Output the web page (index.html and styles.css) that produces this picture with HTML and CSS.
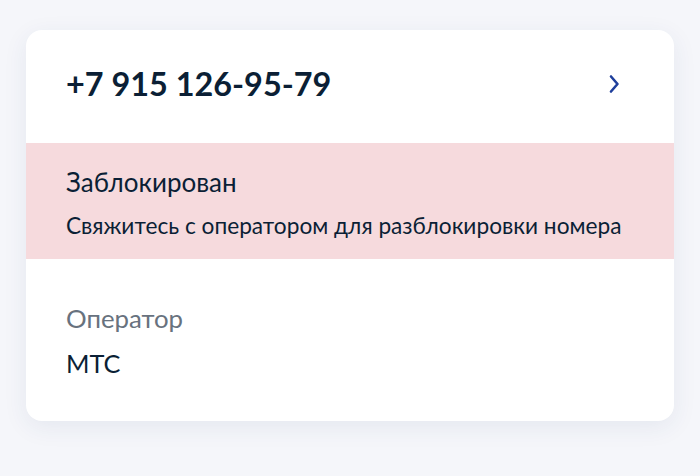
FILE: index.html
```html
<!DOCTYPE html>
<html lang="ru">
<head>
    <meta charset="UTF-8">
    <meta name="viewport" content="width=device-width, initial-scale=1.0">
    <title>Номер телефона</title>
    <link rel="stylesheet" href="styles.css">
</head>
<body>
    <div class="phone-card">
        <div class="phone-head">
            <span class="phone-number">+7 915 126-95-79</span>
            <svg class="chevron" width="24" height="24" viewBox="0 0 24 24" aria-hidden="true">
                <path d="M9 4.5 L15.5 12 L9 19.5" fill="none" stroke="#1f3f9c" stroke-width="2.6" stroke-linecap="round" stroke-linejoin="round"/>
            </svg>
        </div>
        <div class="status-block">
            <div class="status-title">Заблокирован</div>
            <div class="status-text">Свяжитесь с оператором для разблокировки номера</div>
        </div>
        <div class="info-block">
            <div class="info-label">Оператор</div>
            <div class="info-value">МТС</div>
        </div>
    </div>
</body>
</html>
```

FILE: styles.css
```css
body {
    font-family: Lato, "Noto Sans", sans-serif;
    margin: 0;
    padding: 30px 26px;
    background: #f5f6fa;
    color: #0b1f35;
}
.phone-card {
    background: white;
    border-radius: 16px;
    box-shadow: 0 6px 24px rgba(40, 60, 120, 0.08);
    overflow: hidden;
}
.phone-head {
    display: flex;
    justify-content: space-between;
    align-items: center;
    padding: 34px 48px 39px 40px;
}
.phone-number {
    font-size: 32.4px;
    font-weight: 700;
    line-height: 40px;
}
.chevron {
    display: block;
}
.status-block {
    background: #f6dadd;
    padding: 23px 40px 18px;
}
.status-title {
    font-size: 26px;
    line-height: 32px;
    margin-bottom: 13px;
}
.status-text {
    font-size: 22.7px;
    line-height: 30px;
}
.info-block {
    padding: 43px 40px 42px;
}
.info-label {
    font-size: 25.8px;
    line-height: 32px;
    color: #68727e;
    margin-bottom: 13px;
}
.info-value {
    font-size: 25.3px;
    line-height: 32px;
}
```
